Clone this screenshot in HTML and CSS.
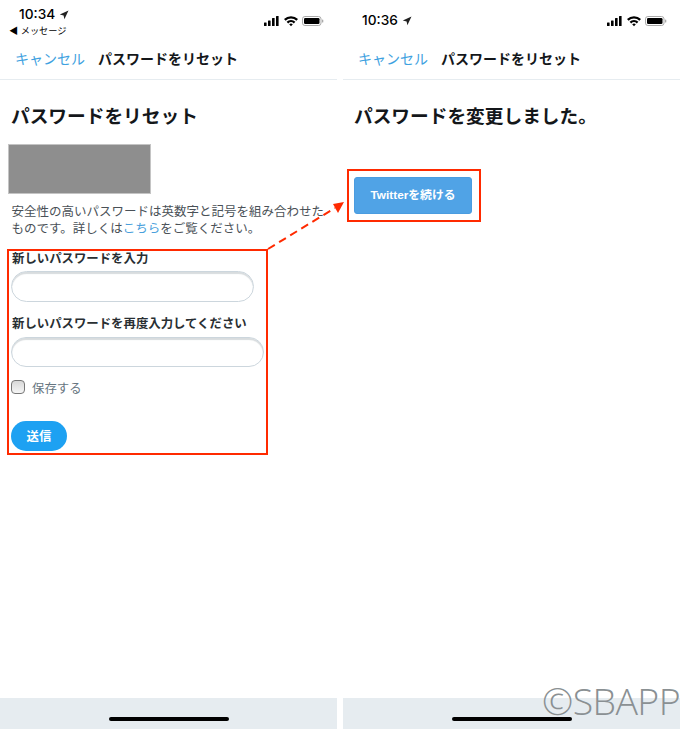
FILE: index.html
```html
<!DOCTYPE html>
<html lang="ja">
  <head>
    <meta charset="UTF-8" />
    <title>パスワードをリセット</title>
    <link rel="stylesheet" href="styles.css">
  </head>
  <body>
    <div class="shots">
      <!-- Reset form -->
      <section class="phone">
        <div class="status status-back">
          <div class="clock">
            <div class="time">10:34 <svg class="loc" viewBox="0 0 10 10"><path d="M9.5 .5 L.8 4.6 L4.6 5.4 L5.4 9.2 Z" /></svg></div>
            <div class="back">◀ メッセージ</div>
          </div>
          <svg class="status-icons" viewBox="0 0 60 12">
            <rect x="0" y="7.5" width="2.6" height="3.5" rx=".5" />
            <rect x="4" y="5.5" width="2.6" height="5.5" rx=".5" />
            <rect x="8" y="3" width="2.6" height="8" rx=".5" />
            <rect x="12" y="1" width="2.6" height="10" rx=".5" />
            <path d="M20 4 A10 10 0 0 1 34 4 L32.4 5.7 A7.6 7.6 0 0 0 21.6 5.7 Z" />
            <path d="M22.6 6.7 A6.3 6.3 0 0 1 31.4 6.7 L29.8 8.4 A4 4 0 0 0 24.2 8.4 Z" />
            <path d="M25.2 9.3 A2.6 2.6 0 0 1 28.8 9.3 L27 11.2 Z" />
            <rect x="38.5" y="1.5" width="18.5" height="9" rx="2.4" fill="none" stroke="#aaa" />
            <rect x="40" y="3" width="15.5" height="6" rx="1.2" />
            <rect x="58" y="4.5" width="1.3" height="3" rx=".6" fill="#aaa" />
          </svg>
        </div>
        <nav class="nav"><a class="cancel">キャンセル</a><span class="nav-title">パスワードをリセット</span></nav>
        <main class="content">
          <h1>パスワードをリセット</h1>
          <div class="redacted"></div>
          <p class="hint">安全性の高いパスワードは英数字と記号を組み合わせた<br />ものです。詳しくは<a class="link">こちら</a>をご覧ください。</p>
          <form class="reset-form">
            <label class="field-label">新しいパスワードを入力</label>
            <input class="field field-short" type="password" />
            <label class="field-label second">新しいパスワードを再度入力してください</label>
            <input class="field field-long" type="password" />
            <label class="remember"><input class="check" type="checkbox" /><span class="remember-text">保存する</span></label>
            <button class="send" type="button">送信</button>
          </form>
        </main>
        <footer class="home"><span class="home-bar"></span></footer>
      </section>

      <!-- Done page -->
      <section class="phone">
        <div class="status status-plain">
          <div class="time">10:36 <svg class="loc" viewBox="0 0 10 10"><path d="M9.5 .5 L.8 4.6 L4.6 5.4 L5.4 9.2 Z" /></svg></div>
          <svg class="status-icons" viewBox="0 0 60 12">
            <rect x="0" y="7.5" width="2.6" height="3.5" rx=".5" />
            <rect x="4" y="5.5" width="2.6" height="5.5" rx=".5" />
            <rect x="8" y="3" width="2.6" height="8" rx=".5" />
            <rect x="12" y="1" width="2.6" height="10" rx=".5" />
            <path d="M20 4 A10 10 0 0 1 34 4 L32.4 5.7 A7.6 7.6 0 0 0 21.6 5.7 Z" />
            <path d="M22.6 6.7 A6.3 6.3 0 0 1 31.4 6.7 L29.8 8.4 A4 4 0 0 0 24.2 8.4 Z" />
            <path d="M25.2 9.3 A2.6 2.6 0 0 1 28.8 9.3 L27 11.2 Z" />
            <rect x="38.5" y="1.5" width="18.5" height="9" rx="2.4" fill="none" stroke="#aaa" />
            <rect x="40" y="3" width="15.5" height="6" rx="1.2" />
            <rect x="58" y="4.5" width="1.3" height="3" rx=".6" fill="#aaa" />
          </svg>
        </div>
        <nav class="nav"><a class="cancel">キャンセル</a><span class="nav-title">パスワードをリセット</span></nav>
        <main class="content">
          <h1>パスワードを変更しました。</h1>
          <button class="continue" type="button">Twitterを続ける</button>
        </main>
        <footer class="home"><span class="home-bar"></span></footer>
      </section>

      <!-- Annotations on top of the screenshots -->
      <div class="mark mark-form"></div>
      <div class="mark mark-button"></div>
      <svg class="arrow" viewBox="0 0 680 729">
        <line x1="268" y1="249" x2="335" y2="208" stroke="#ff2a00" stroke-width="2" stroke-dasharray="8 5" />
        <path d="M344 202 L333 204 L338 213 Z" fill="#ff2a00" />
      </svg>
      <div class="watermark">©SBAPP</div>
    </div>
  </body>
</html>
```

FILE: styles.css
```css
* {
  box-sizing: border-box;
}

body {
  margin: 0;
  background: #fff;
  font-family: "Liberation Sans", "Noto Sans CJK JP", sans-serif;
  color: #14171a;
}

.shots {
  position: relative;
  display: flex;
  justify-content: space-between;
  width: 680px;
  height: 729px;
  overflow: hidden;
}

.phone {
  display: flex;
  flex-direction: column;
  width: 337px;
  height: 729px;
}

/* Status bar */
.status {
  display: flex;
  justify-content: space-between;
  height: 42px;
  color: #000;
}

.status-back {
  padding: 6px 13px 0 9px;
}

.status-plain {
  padding: 12px 13px 0 19px;
}

.status-back .time {
  padding-left: 10px;
}

.time {
  display: flex;
  align-items: center;
  gap: 4px;
  height: 17px;
  font-family: "Inter", "Liberation Sans", sans-serif;
  font-size: 13.7px;
  font-weight: 500;
  line-height: 17px;
}

.loc {
  width: 10px;
  height: 10px;
  fill: #222;
}

.back {
  margin-top: 1px;
  font-size: 9.2px;
  line-height: 14px;
}

.status-icons {
  width: 60px;
  height: 12px;
  fill: #000;
}

.status-back .status-icons {
  margin-top: 9px;
}

.status-plain .status-icons {
  margin-top: 3px;
}

/* Nav */
.nav {
  display: flex;
  align-items: center;
  gap: 13px;
  height: 38px;
  padding: 0 0 3px 15px;
  border-bottom: 1px solid #e6ecf0;
  font-size: 14px;
  line-height: 20px;
}

.cancel {
  color: #3ea1e0;
}

.nav-title {
  font-weight: 700;
  color: #14171a;
}

.content {
  flex: 1;
}

h1 {
  margin: 24px 0 0 11px;
  font-size: 18.7px;
  font-weight: 700;
  line-height: 26px;
  color: #14171a;
}

.redacted {
  width: 143px;
  height: 50px;
  margin: 14px 0 0 8px;
  background: #8e8e8e;
  border: 1px solid #c4c4c4;
}

.hint {
  margin: 10px 0 0 11.5px;
  font-size: 12.5px;
  line-height: 16.5px;
  white-space: nowrap;
  color: #4a5157;
}

.link {
  color: #4a9fdc;
}

/* Form */
.reset-form {
  display: flex;
  flex-direction: column;
  align-items: flex-start;
  margin: 11px 0 0 11px;
}

.field-label {
  padding-left: 1px;
  font-size: 12.4px;
  font-weight: 700;
  line-height: 22px;
  color: #292f33;
}

.second {
  margin-top: 11px;
}

.field {
  height: 30.5px;
  margin-top: 1px;
  border: 1px solid #ccd6dd;
  border-radius: 16px;
  background: #fff;
  box-shadow: inset 0 2px 1px #d8dcde;
  outline: none;
}

.second + .field {
  margin-top: 2px;
}

.field-short {
  width: 243px;
}

.field-long {
  width: 253px;
}

.remember {
  display: flex;
  align-items: flex-start;
  gap: 7px;
  margin-top: 13px;
  font-size: 12.4px;
  line-height: 19px;
  color: #66757f;
}

.check {
  appearance: none;
  width: 14px;
  height: 14px;
  margin: 0;
  border: 1px solid #777;
  border-radius: 4px;
  background: linear-gradient(#d8d8d8, #f6f6f6);
}

.send {
  width: 56px;
  height: 30px;
  margin-top: 22px;
  padding: 0;
  border: none;
  border-radius: 15px;
  background: #1da1f2;
  color: #fff;
  font-family: inherit;
  font-size: 12.4px;
  font-weight: 700;
}

.continue {
  display: block;
  width: 118px;
  height: 37px;
  margin: 47px 0 0 11px;
  padding: 0 0 4px;
  border: 1px solid #4a9ce0;
  border-radius: 3px;
  background: #50a3e6;
  color: #fff;
  font-family: inherit;
  font-size: 11.8px;
  font-weight: 700;
}

/* Bottom bar */
.home {
  display: flex;
  justify-content: center;
  align-items: flex-end;
  height: 31px;
  padding-bottom: 8px;
  background: #e6ecf0;
}

.home-bar {
  width: 120px;
  height: 4px;
  border-radius: 2px;
  background: #000;
}

/* Annotations */
.mark {
  position: absolute;
  border: 2px solid #ff2a00;
}

.mark-form {
  left: 7px;
  top: 249px;
  width: 261px;
  height: 206px;
}

.mark-button {
  left: 347px;
  top: 169px;
  width: 134px;
  height: 53px;
}

.arrow {
  position: absolute;
  left: 0;
  top: 0;
  width: 680px;
  height: 729px;
  pointer-events: none;
}

.watermark {
  position: absolute;
  right: 0;
  top: 676px;
  font-family: "Open Sans", sans-serif;
  font-size: 37.5px;
  font-weight: 300;
  line-height: 50px;
  letter-spacing: -0.6px;
  color: #8a9093;
  white-space: nowrap;
}
```
